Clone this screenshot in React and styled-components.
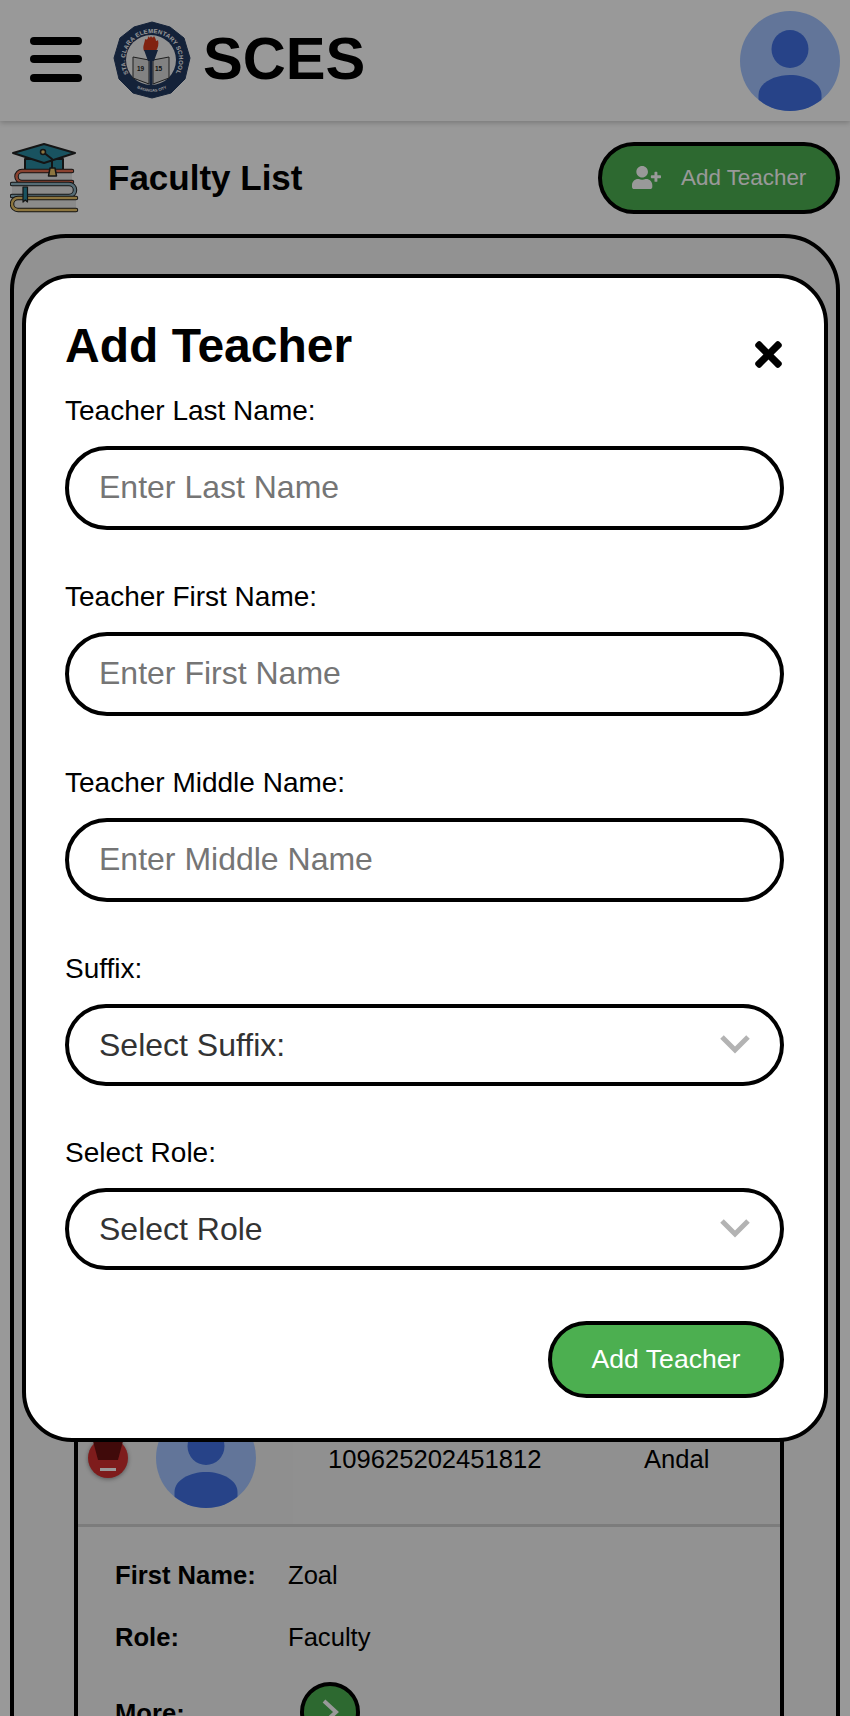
import React from 'react';
import styled, { createGlobalStyle } from 'styled-components';
import { FaUserPlus, FaTimes } from 'react-icons/fa';

const GlobalStyle = createGlobalStyle`
  html, body {
    margin: 0;
    padding: 0;
    background: #ffffff;
    font-family: "Liberation Sans", Arial, sans-serif;
  }
  * { box-sizing: border-box; }
`;

const Page = styled.div`
  position: relative;
  width: 850px;
  height: 1716px;
  overflow: hidden;
  background: #ffffff;
  color: #000000;
`;

const Header = styled.header`
  height: 121px;
  display: flex;
  align-items: center;
  padding: 0 10px 0 30px;
  background: #ffffff;
  box-shadow: 0 2px 5px rgba(0, 0, 0, 0.2);
`;

const Hamburger = styled.div`
  width: 52px;
  height: 45px;
  margin-top: -3px;
  display: flex;
  flex-direction: column;
  justify-content: space-between;
  span {
    height: 8px;
    border-radius: 4px;
    background: #000000;
  }
`;

const LogoWrap = styled.div`
  width: 78px;
  height: 78px;
  margin: -1px 0 0 31px;
  flex-shrink: 0;
`;

const Brand = styled.div`
  margin: -4px 0 0 12px;
  font-size: 59.6px;
  font-weight: 700;
  line-height: 70px;
`;

const AvatarImage = styled.svg`
  display: block;
  flex-shrink: 0;
  margin-left: ${p => p.$push ? 'auto' : '0'};
`;

const TitleRow = styled.div`
  height: 113px;
  display: flex;
  align-items: center;
  padding: 0 10px;
`;

const BookIcon = styled.svg`
  display: block;
  width: 70px;
  height: 70px;
  margin-top: 1px;
`;

const PageTitle = styled.h1`
  margin: 0 0 0 28px;
  font-size: 35px;
  font-weight: 700;
`;

const OpenButton = styled.button`
  width: 242px;
  height: 72px;
  margin-left: auto;
  display: flex;
  align-items: center;
  gap: 20px;
  padding: 0 0 0 30px;
  border: 4px solid #000000;
  border-radius: 36px;
  background: #4caf50;
  color: #ffffff;
  font-family: inherit;
  font-size: 22.4px;
`;

const ListPanel = styled.section`
  height: 1600px;
  margin: 0 10px;
  padding: 60px 52px 0 60px;
  border: 4px solid #000000;
  border-radius: 56px;
  background: #f3f3f3;
`;

const Table = styled.div`
  height: 1500px;
  padding-top: 1090px;
  border: solid #000000;
  border-width: 4px;
  background: #f3f3f3;
`;

const TeacherRow = styled.div`
  display: grid;
  grid-template-columns: 215px 316px 1fr;
  height: 135px;
  border-bottom: 3px solid #cfcfcf;
  font-size: 25.6px;
`;

const PhotoCell = styled.div`
  display: flex;
  align-items: center;
  gap: 26px;
  padding-left: 8px;
  background: #eeeeee;
`;

const RemoveButton = styled.svg`
  display: block;
  width: 44px;
  height: 44px;
  flex-shrink: 0;
  filter: drop-shadow(0 1px 2px rgba(0, 0, 0, 0.4));
`;

const TextCell = styled.div`
  padding: 52px 0 0 35px;
  background: #f0f0f0;
  line-height: 30px;
`;

const Details = styled.div`
  padding: 33px 37px;
  font-size: 25.6px;
`;

const DetailRow = styled.div`
  display: grid;
  grid-template-columns: 173px 1fr;
  align-items: center;
  height: 30px;
  margin-bottom: 32px;
  strong { font-weight: 700; }
`;

const MoreButton = styled.div`
  width: 60px;
  height: 60px;
  margin-left: 12px;
  margin-top: -2px;
  display: flex;
  align-items: center;
  justify-content: center;
  border: 4px solid #000000;
  border-radius: 50%;
  background: #4caf50;
`;

const Dim = styled.div`
  position: absolute;
  inset: 0;
  background: rgba(0, 0, 0, 0.4);
`;

const Modal = styled.form`
  position: absolute;
  left: 22px;
  top: 274px;
  width: 806px;
  height: 1168px;
  padding: 40px 40px 40px 39px;
  display: flex;
  flex-direction: column;
  border: 4px solid #000000;
  border-radius: 50px;
  background: #ffffff;
`;

const ModalHead = styled.div`
  display: flex;
  justify-content: space-between;
  align-items: center;
  height: 55px;
  margin-bottom: 22px;
`;

const ModalTitle = styled.h2`
  margin: 0;
  font-size: 48px;
  font-weight: 700;
  line-height: 55px;
`;

const CloseButton = styled.div`
  display: flex;
  margin: 18px -4px 0 0;
  font-size: 39px;
`;

const Field = styled.div`
  display: flex;
  flex-direction: column;
  gap: 19px;
  margin-bottom: 51px;
`;

const Label = styled.label`
  font-size: 28px;
  line-height: 32px;
`;

const TextInput = styled.input`
  width: 719px;
  height: 84px;
  padding: 0 30px 2px;
  border: 4px solid #000000;
  border-radius: 42px;
  background: #ffffff;
  font-family: inherit;
  font-size: 32px;
  outline: none;
  &::placeholder { color: #757575; }
`;

const SelectWrap = styled.div`
  position: relative;
  width: 719px;
  height: 82px;
`;

const Select = styled.select`
  width: 100%;
  height: 100%;
  padding: 0 30px;
  border: 4px solid #000000;
  border-radius: 41px;
  background: #ffffff;
  color: #333333;
  font-family: inherit;
  font-size: 32px;
  appearance: none;
  outline: none;
`;

const Chevron = styled.svg`
  position: absolute;
  right: 33px;
  top: 30px;
  width: 32px;
  height: 20px;
`;

const SubmitRow = styled.div`
  display: flex;
  justify-content: flex-end;
`;

const SubmitButton = styled.button`
  width: 236px;
  height: 77px;
  border: 4px solid #000000;
  border-radius: 39px;
  background: #4caf50;
  color: #ffffff;
  font-family: inherit;
  font-size: 26.6px;
`;

function Avatar({ size, push }) {
  const id = `clip-${size}-${push ? 'a' : 'b'}`;
  return (
    <AvatarImage $push={push} width={size} height={size} viewBox="0 0 100 100">
      <defs>
        <clipPath id={id}><circle cx="50" cy="50" r="50" /></clipPath>
      </defs>
      <circle cx="50" cy="50" r="50" fill="#a3c4ff" />
      <g clipPath={`url(#${id})`} fill="#4171e3">
        <ellipse cx="50" cy="38" rx="18.5" ry="19" />
        <path d="M18.5 100V84C18.5 72 34 64 50 64s31.500 8 31.500 20v16z" />
      </g>
    </AvatarImage>
  );
}

function SchoolLogo() {
  return (
    <svg width="78" height="78" viewBox="0 0 78 78">
      <defs>
        <path id="logo-top" d="M15.600 52.500A27 27 0 1 1 62.400 52.500" />
        <path id="logo-bottom" d="M17 62A32 32 0 0 0 61 62" />
      </defs>
      <polygon points="39,1 57,6 71,17 77,37 72,58 58,72 39,77 20,72 6,58 1,37 7,17 21,6" fill="#22395f" stroke="#22395f" strokeLinejoin="round" strokeWidth="1" />
      <circle cx="38" cy="39" r="25" fill="#f3f3f3" />
      <text fontFamily="Liberation Sans" fontWeight="700" fontSize="6" fill="#ffffff">
        <textPath href="#logo-top" textLength="112">STA. CLARA ELEMENTARY SCHOOL</textPath>
      </text>
      <text fontFamily="Liberation Sans" fontWeight="700" fontSize="3.800" fill="#ffffff" textAnchor="middle">
        <textPath href="#logo-bottom" startOffset="50%">BATANGAS CITY</textPath>
      </text>
      <path d="M20 36l16 3v24l-16-6z" fill="#d9d9d9" stroke="#333" strokeWidth="1" />
      <path d="M56 36l-16 3v24l16-6z" fill="#d9d9d9" stroke="#333" strokeWidth="1" />
      <path d="M31 30c-2-5 1-8 1-12 2 1 3 1 3-3 1 2 2 2 3 0 1 2 2 2 3 0 1 2 2 3 2 5 1 0 2-1 2-1 1 4 0 8-2 11z" fill="#d8391c" />
      <path d="M31 29h14l-4 11h-1.500v24h-3V40H35z" fill="#22395f" />
      <text x="24" y="50" fontFamily="Liberation Sans" fontWeight="700" fontSize="6.500" fill="#222">19</text>
      <text x="42" y="50" fontFamily="Liberation Sans" fontWeight="700" fontSize="6.500" fill="#222">15</text>
    </svg>
  );
}

function BooksIcon() {
  return (
    <BookIcon viewBox="0 0 70 70" fill="none" strokeLinecap="round" strokeLinejoin="round">
      <path d="M15 16v13h38V16z" fill="#2a8ba0" stroke="#222" strokeWidth="2" />
      <path d="M3 10L34 1l31 9-31 10z" fill="#2a8ba0" stroke="#222" strokeWidth="2" />
      <path d="M33 9l9 7v10" stroke="#222" strokeWidth="2" />
      <circle cx="33" cy="9" r="2.500" fill="#e9c46a" stroke="#222" strokeWidth="1.500" />
      <path d="M6 33.500a6 6 0 0 1 6-6h50v12H12a6 6 0 0 1-6-6z" fill="#e8e8e8" />
      <path d="M62 28H12a5.500 5.500 0 0 0 0 11h50" stroke="#222" strokeWidth="4.500" />
      <path d="M62 28H12a5.500 5.500 0 0 0 0 11h50" stroke="#e76f51" strokeWidth="2.500" />
      <path d="M40 25h5l1.500 8h-8z" fill="#e9c46a" stroke="#222" strokeWidth="1.500" />
      <path d="M2 41h57a6 6 0 0 1 0 12H2z" fill="#e8e8e8" />
      <path d="M2 41h57a6 6 0 0 1 0 12H2" stroke="#222" strokeWidth="4.500" />
      <path d="M2 41h57a6 6 0 0 1 0 12H2" stroke="#8fb5c4" strokeWidth="2.500" />
      <path d="M66 55H8a6 6 0 0 0 0 12h58z" fill="#e8e8e8" />
      <path d="M66 55H8a6 6 0 0 0 0 12h58" stroke="#222" strokeWidth="4.500" />
      <path d="M66 55H8a6 6 0 0 0 0 12h58" stroke="#e9c46a" strokeWidth="2.500" />
      <path d="M13 44h4.500v15l-2.250-2-2.250 2z" fill="#2a8ba0" stroke="#222" strokeWidth="1.200" />
    </BookIcon>
  );
}

function TextField({ label, placeholder }) {
  return (
    <Field>
      <Label>{label}</Label>
      <TextInput type="text" placeholder={placeholder} />
    </Field>
  );
}

function SelectField({ label, placeholder }) {
  return (
    <Field>
      <Label>{label}</Label>
      <SelectWrap>
        <Select defaultValue="">
          <option value="">{placeholder}</option>
        </Select>
        <Chevron viewBox="0 0 32 20" fill="none">
          <path d="M3 3l13 13L29 3" stroke="#b3b3b3" strokeWidth="5" />
        </Chevron>
      </SelectWrap>
    </Field>
  );
}

export default function App() {
  return (
    <Page>
      <GlobalStyle />
      <Header>
        <Hamburger><span /><span /><span /></Hamburger>
        <LogoWrap><SchoolLogo /></LogoWrap>
        <Brand>SCES</Brand>
        <Avatar size={100} push />
      </Header>
      <TitleRow>
        <BooksIcon />
        <PageTitle>Faculty List</PageTitle>
        <OpenButton type="button"><FaUserPlus size={29} />Add Teacher</OpenButton>
      </TitleRow>
      <ListPanel>
        <Table>
          <TeacherRow>
            <PhotoCell>
              <RemoveButton viewBox="0 0 44 44">
                <circle cx="22" cy="22" r="20" fill="#d32f2f" />
                <path d="M7 5h30l-5 19H12z" fill="#6b1111" />
                <rect x="14" y="32" width="16" height="3" fill="#ffffff" />
              </RemoveButton>
              <Avatar size={100} />
            </PhotoCell>
            <TextCell>109625202451812</TextCell>
            <TextCell>Andal</TextCell>
          </TeacherRow>
          <Details>
            <DetailRow><strong>First Name:</strong><span>Zoal</span></DetailRow>
            <DetailRow><strong>Role:</strong><span>Faculty</span></DetailRow>
            <DetailRow>
              <strong>More:</strong>
              <MoreButton>
                <svg width="24" height="30" viewBox="0 0 24 30" fill="none">
                  <path d="M6 4l12 11L6 26" stroke="#ffffff" strokeWidth="4" />
                </svg>
              </MoreButton>
            </DetailRow>
          </Details>
        </Table>
      </ListPanel>
      <Dim />
      <Modal>
        <ModalHead>
          <ModalTitle>Add Teacher</ModalTitle>
          <CloseButton><FaTimes /></CloseButton>
        </ModalHead>
        <TextField label="Teacher Last Name:" placeholder="Enter Last Name" />
        <TextField label="Teacher First Name:" placeholder="Enter First Name" />
        <TextField label="Teacher Middle Name:" placeholder="Enter Middle Name" />
        <SelectField label="Suffix:" placeholder="Select Suffix:" />
        <SelectField label="Select Role:" placeholder="Select Role" />
        <SubmitRow><SubmitButton type="button">Add Teacher</SubmitButton></SubmitRow>
      </Modal>
    </Page>
  );
}
